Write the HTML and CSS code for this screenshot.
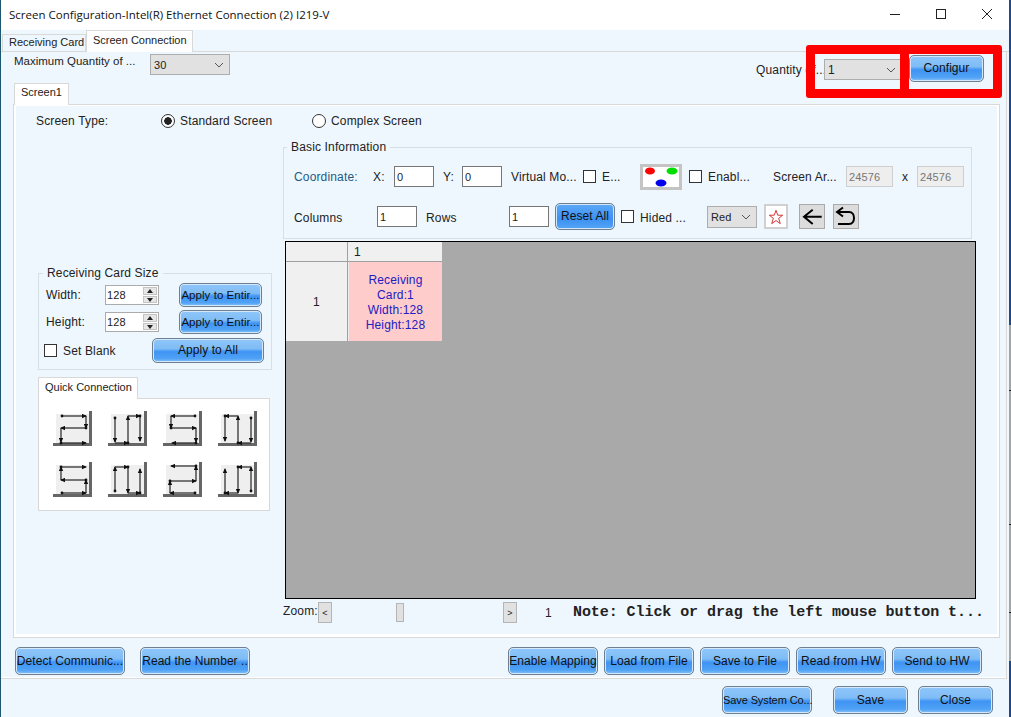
FILE: index.html
```html
<!DOCTYPE html>
<html>
<head>
    <title>Screen Configuration</title>
    <link rel="stylesheet" href="styles.css">
</head>
<body>
    <svg class="defs" width="0" height="0">
        <defs>
            <marker id="arr" markerWidth="5" markerHeight="5" refX="4" refY="2.5" orient="auto" markerUnits="userSpaceOnUse">
                <path d="M0 0.300L5 2.500L0 4.700Z" fill="#111"/>
            </marker>
            <marker id="dot" markerWidth="4" markerHeight="4" refX="2" refY="2" markerUnits="userSpaceOnUse">
                <circle cx="2" cy="2" r="1.400" fill="#111"/>
            </marker>
        </defs>
    </svg>

    <div class="window">
        <div class="titlebar">
            <span class="title">Screen Configuration-Intel(R) Ethernet Connection (2) I219-V</span>
            <div class="winbtns">
                <svg width="12" height="12" viewBox="0 0 12 12"><path d="M1 6.500H11" stroke="#222"/></svg>
                <svg width="12" height="12" viewBox="0 0 12 12"><rect x="1.500" y="1.500" width="9" height="9" fill="none" stroke="#222"/></svg>
                <svg width="12" height="12" viewBox="0 0 12 12"><path d="M1 1L11 11M11 1L1 11" stroke="#222"/></svg>
            </div>
        </div>

        <div class="tabbar">
            <div class="tab tab-off">Receiving Card</div>
            <div class="tab tab-on">Screen Connection</div>
        </div>

        <div class="page">
            <div class="toprow">
                <span class="maxlabel">Maximum Quantity of ...</span>
                <select class="sel sel-max"><option>30</option></select>
                <span class="qtylabel">Quantity of...</span>
                <select class="sel sel-qty"><option>1</option></select>
                <button class="btn btn-config">Configur</button>
            </div>

            <div class="tab screen-tab">Screen1</div>
            <div class="panel">
                <div class="panel-in">
                    <div class="typerow">
                        <span class="typelabel">Screen Type:</span>
                        <input type="radio" name="stype" checked>
                        <span class="typeopt">Standard Screen</span>
                        <input type="radio" name="stype">
                        <span>Complex Screen</span>
                    </div>

                    <div class="columns">
                        <div class="leftcol">
                            <fieldset class="cardsize">
                                <legend>Receiving Card Size</legend>
                                <div class="sizerow">
                                    <span class="sizelabel">Width:</span>
                                    <div class="spin">
                                        <input type="text" value="128">
                                        <div class="spinbtns"><i class="up"></i><i class="down"></i></div>
                                    </div>
                                    <button class="btn btn-apply">Apply to Entir...</button>
                                </div>
                                <div class="sizerow">
                                    <span class="sizelabel">Height:</span>
                                    <div class="spin">
                                        <input type="text" value="128">
                                        <div class="spinbtns"><i class="up"></i><i class="down"></i></div>
                                    </div>
                                    <button class="btn btn-apply">Apply to Entir...</button>
                                </div>
                                <div class="blankrow">
                                    <input type="checkbox">
                                    <span class="blanklabel">Set Blank</span>
                                    <button class="btn btn-all">Apply to All</button>
                                </div>
                            </fieldset>

                            <div class="tab quick-tab">Quick Connection</div>
                            <div class="quick">
                                <svg viewBox="0 0 39 35"><rect class="qc-bg" x="3" y="3" width="33" height="29"/><path class="qc-l" d="M0 33.500H37.500V0"/>
                                    <g class="qc-p"><path d="M33 5V17"/><path d="M8 17V31"/><path d="M9 5H33"/><path d="M33 17H8"/><path d="M8 32H33"/></g></svg>
                                <svg viewBox="0 0 39 35"><rect class="qc-bg" x="3" y="3" width="33" height="29"/><path class="qc-l" d="M0 33.500H37.500V0"/>
                                    <g class="qc-p"><path d="M7 7V31"/><path d="M7 32H20"/><path d="M20 32V5"/><path d="M20 5H32"/><path d="M32 5V30"/></g></svg>
                                <svg viewBox="0 0 39 35"><rect class="qc-bg" x="3" y="3" width="33" height="29"/><path class="qc-l" d="M0 33.500H37.500V0"/>
                                    <g class="qc-p"><path d="M8 5V17"/><path d="M33 17V31"/><path d="M32 5H8"/><path d="M8 17H33"/><path d="M33 32H9"/></g></svg>
                                <svg viewBox="0 0 39 35"><rect class="qc-bg" x="3" y="3" width="33" height="29"/><path class="qc-l" d="M0 33.500H37.500V0"/>
                                    <g class="qc-p"><path d="M33 7V31"/><path d="M33 32H20"/><path d="M20 32V5"/><path d="M20 5H7"/><path d="M7 5V30"/></g></svg>
                                <svg viewBox="0 0 39 35"><rect class="qc-bg" x="3" y="3" width="33" height="29"/><path class="qc-l" d="M0 33.500H37.500V0"/>
                                    <g class="qc-p"><path d="M33 31V18"/><path d="M8 18V5"/><path d="M9 31H33"/><path d="M33 18H8"/><path d="M8 5H33"/></g></svg>
                                <svg viewBox="0 0 39 35"><rect class="qc-bg" x="3" y="3" width="33" height="29"/><path class="qc-l" d="M0 33.500H37.500V0"/>
                                    <g class="qc-p"><path d="M7 29V5"/><path d="M7 5H20"/><path d="M20 5V31"/><path d="M20 31H32"/><path d="M32 31V7"/></g></svg>
                                <svg viewBox="0 0 39 35"><rect class="qc-bg" x="3" y="3" width="33" height="29"/><path class="qc-l" d="M0 33.500H37.500V0"/>
                                    <g class="qc-p"><path d="M7 31V19"/><path d="M33 19V4"/><path d="M32 31H7"/><path d="M7 19H33"/><path d="M33 4H8"/></g></svg>
                                <svg viewBox="0 0 39 35"><rect class="qc-bg" x="3" y="3" width="33" height="29"/><path class="qc-l" d="M0 33.500H37.500V0"/>
                                    <g class="qc-p"><path d="M33 29V5"/><path d="M33 5H20"/><path d="M20 5V31"/><path d="M20 31H7"/><path d="M7 31V7"/></g></svg>
                            </div>
                        </div>

                        <div class="rightcol">
                            <fieldset class="basic">
                                <legend>Basic Information</legend>
                                <div class="inforow">
                                    <span class="l79 coord">Coordinate:</span>
                                    <span class="l21">X:</span>
                                    <input class="tb" type="text" value="0">
                                    <span class="l19">Y:</span>
                                    <input class="tb" type="text" value="0">
                                    <span class="l72">Virtual Mo...</span>
                                    <input type="checkbox">
                                    <span class="l38">E...</span>
                                    <button class="rgb">
                                        <svg width="36" height="20" viewBox="0 0 36 20">
                                            <ellipse cx="7" cy="4" rx="5" ry="3.500" fill="#f00"/>
                                            <ellipse cx="29" cy="4" rx="5.500" ry="3.500" fill="#0d0"/>
                                            <ellipse cx="18" cy="16" rx="5.500" ry="3.500" fill="#00e"/>
                                        </svg>
                                    </button>
                                    <input type="checkbox">
                                    <span class="l65">Enabl...</span>
                                    <span class="l73">Screen Ar...</span>
                                    <input class="tb-off" type="text" value="24576" disabled>
                                    <span class="l24">x</span>
                                    <input class="tb-off" type="text" value="24576" disabled>
                                </div>
                                <div class="inforow inforow2">
                                    <span class="l83">Columns</span>
                                    <input class="tb" type="text" value="1">
                                    <span class="l83">Rows</span>
                                    <input class="tb tb-last" type="text" value="1">
                                    <button class="btn btn-reset">Reset All</button>
                                    <input type="checkbox">
                                    <span class="l66">Hided ...</span>
                                    <select class="sel sel-color"><option>Red</option></select>
                                    <button class="iconbtn starbtn">
                                        <svg width="16" height="16" viewBox="0 0 18 18"><path d="M9 1.500L11 7H16.500L12 10.500L13.800 16.500L9 13L4.200 16.500L6 10.500L1.500 7H7Z" fill="none" stroke="#c22" stroke-width="1"/></svg>
                                    </button>
                                    <button class="iconbtn">
                                        <svg width="24" height="23" viewBox="1 1 24 23"><path d="M22.700 12.700H5M13.700 5.700L5 12.700L13.700 20" fill="none" stroke="#000" stroke-width="2"/></svg>
                                    </button>
                                    <button class="iconbtn">
                                        <svg width="24" height="23" viewBox="1 1 24 23"><path d="M10 3.500L4 8L10 12.500M4 8H16C19.500 8 21 11 21 14C21 17 19.500 20 16 20H5" fill="none" stroke="#000" stroke-width="2"/></svg>
                                    </button>
                                </div>
                            </fieldset>

                            <div class="canvas">
                                <div class="cardgrid">
                                    <div class="cell"></div>
                                    <div class="cell cell-head">1</div>
                                    <div class="cell cell-row">1</div>
                                    <div class="cell cell-card">Receiving<br>Card:1<br>Width:128<br>Height:128</div>
                                </div>
                            </div>

                            <div class="zoomrow">
                                <span class="zoomlabel">Zoom:</span>
                                <button class="zoombtn">&lt;</button>
                                <div class="track"><div class="thumb"></div></div>
                                <button class="zoombtn">&gt;</button>
                                <span class="zoomval">1</span>
                                <span class="note">Note: Click or drag the left mouse button t...</span>
                            </div>
                        </div>
                    </div>
                </div>
            </div>

            <div class="actions">
                <button class="btn btn-left">Detect Communic...</button>
                <button class="btn btn-left">Read the Number ..</button>
                <div class="actions-right">
                    <button class="btn btn-act">Enable Mapping</button>
                    <button class="btn btn-act">Load from File</button>
                    <button class="btn btn-act">Save to File</button>
                    <button class="btn btn-act">Read from HW</button>
                    <button class="btn btn-act">Send to HW</button>
                </div>
            </div>
        </div>

        <div class="footer">
            <button class="btn btn-act btn-sys">Save System Co...</button>
            <button class="btn btn-foot">Save</button>
            <button class="btn btn-foot">Close</button>
        </div>

        <!-- red annotation boxes drawn over the screenshot -->
        <div class="mark mark-a"></div>
        <div class="mark mark-b"></div>
        <!-- bit of desktop showing past the window edge -->
        <div class="edge"></div>
    </div>
</body>
</html>
```

FILE: styles.css
```css
* {
    box-sizing: border-box;
}
body {
    margin: 0;
    font-family: "Liberation Sans", Arial, sans-serif;
    font-size: 12px;
    letter-spacing: 0.15px;
    color: #222;
}
span, legend {
    white-space: nowrap;
}
input, select, button {
    font-family: inherit;
    font-size: 12px;
    letter-spacing: inherit;
    color: #222;
    margin: 0;
}
.defs {
    position: absolute;
}
.window {
    position: relative;
    width: 1011px;
    height: 717px;
    overflow: hidden;
    background: #eef7fe;
    border-left: 1px solid #1d5670;
}

/* title bar */
.titlebar {
    height: 30px;
    background: #fff;
    display: flex;
    align-items: center;
    padding: 0 0 2px 8px;
}
.title {
    font-family: "Open Sans", sans-serif;
    font-size: 11.500px;
    letter-spacing: 0;
    color: #111;
}
.winbtns {
    margin-left: auto;
    display: flex;
    gap: 34px;
    padding-right: 18px;
}

/* tabs */
.tabbar {
    height: 22px;
    display: flex;
    align-items: flex-end;
    padding-left: 1px;
    border-bottom: 1px solid #d9d9d9;
}
.tab {
    border: 1px solid #d9d9d9;
    border-bottom: none;
    background: #fff;
    white-space: nowrap;
    font-size: 11px;
    letter-spacing: 0;
}
.tab-off {
    width: 84px;
    height: 17px;
    padding-left: 6px;
    line-height: 15px;
    background: #eef7fe;
}
.tab-on {
    width: 107px;
    height: 22px;
    padding-left: 6px;
    line-height: 19px;
    margin-bottom: -1px;
    position: relative;
}
.page {
    width: 1006px;
    height: 627px;
    border-bottom: 1px solid #d9d9d9;
    border-right: 1px solid #d9d9d9;
    box-shadow: inset 0 -1px 0 #fff;
}

/* top controls */
.toprow {
    height: 31px;
    display: flex;
    align-items: flex-start;
    padding-left: 13px;
}
.maxlabel {
    width: 136px;
    margin-top: 3px;
    font-size: 11.500px;
    letter-spacing: 0;
}
.sel {
    appearance: none;
    border: 1px solid #adadad;
    border-radius: 0;
    background: #e1e1e1 url("data:image/svg+xml,%3Csvg xmlns='http://www.w3.org/2000/svg' width='10' height='6'%3E%3Cpath d='M1 1L5 5L9 1' fill='none' stroke='%23555'/%3E%3C/svg%3E") no-repeat right 5px center;
    padding: 0 0 0 3px;
    height: 21px;
    font-size: 11px;
}
.sel-max {
    width: 80px;
    margin-top: 2px;
}
.qtylabel {
    width: 68px;
    margin-left: 526px;
    margin-top: 11px;
}
.sel-qty {
    width: 78px;
    margin-top: 7px;
    font-size: 12px;
}
.btn {
    border: 1px solid #6d7f90;
    border-radius: 5px;
    padding: 0 0 1px;
    white-space: nowrap;
    overflow: hidden;
    color: #111;
    font-size: 12px;
    letter-spacing: 0.05px;
    background: linear-gradient(#8fc6f9 0, #7fbcf6 42%, #3f94f4 55%, #4fa2f5 85%, #8ac3f8 100%);
    box-shadow: inset 0 0 0 1px #d3e8fb;
}
.btn-config {
    width: 75px;
    height: 27px;
    margin-left: 7px;
    margin-top: 3px;
}

/* screen tab and panel */
.screen-tab {
    width: 55px;
    height: 22px;
    margin-left: 13px;
    margin-bottom: -1px;
    padding-left: 6px;
    line-height: 17px;
    position: relative;
    z-index: 1;
}
.panel {
    width: 987px;
    height: 534px;
    margin-left: 12px;
    border: 1px solid #d9d9d9;
    padding: 1px 2px 3px;
    background: #fff;
}
.panel-in {
    height: 100%;
    background: #eef7fe;
    padding-top: 5px;
}
.typerow {
    height: 20px;
    display: flex;
    align-items: center;
    padding-left: 20px;
}
.typelabel {
    width: 125px;
}
.typeopt {
    width: 132px;
}
input[type="radio"] {
    appearance: none;
    width: 14px;
    height: 14px;
    border: 1px solid #333;
    border-radius: 50%;
    background: #fff;
    margin-right: 5px;
}
input[type="radio"]:checked {
    background: radial-gradient(circle, #222 0 3.500px, #fff 4px);
}
input[type="checkbox"] {
    appearance: none;
    flex: none;
    width: 13px;
    height: 13px;
    border: 1px solid #333;
    background: #fff;
    margin-right: 6px;
}
.columns {
    display: flex;
    margin-top: 9px;
}
.leftcol {
    width: 267px;
    padding-left: 22px;
}
.rightcol {
    flex: 1;
}
fieldset {
    margin: 0;
    border: 1px solid #d5dfe6;
    min-width: 0;
}
legend {
    padding: 0 4px;
    line-height: 14px;
}

/* receiving card size */
.cardsize {
    width: 234px;
    height: 104px;
    margin-top: 126px;
    padding: 3px 0 0 7px;
}
.cardsize legend {
    margin-left: -3px;
}
.sizerow {
    display: flex;
    align-items: center;
    height: 24px;
    margin-bottom: 3px;
}
.sizelabel {
    width: 59px;
}
.spin {
    width: 54px;
    height: 20px;
    display: flex;
    background: #fff;
    border: 1px solid #ababab;
    padding: 1px;
}
.spin input {
    width: 36px;
    height: 16px;
    border: none;
    padding: 0;
    font-size: 11px;
    background: #fff;
    outline: none;
}
.spinbtns {
    width: 14px;
    display: flex;
    flex-direction: column;
    gap: 1px;
}
.spinbtns i {
    flex: 1;
    background: #e6e6e6;
    border: 1px solid #c4c4c4;
    position: relative;
}
.spinbtns i::after {
    content: "";
    position: absolute;
    left: 3px;
    border-left: 3px solid transparent;
    border-right: 3px solid transparent;
}
.spinbtns .up::after {
    top: 1px;
    border-bottom: 4px solid #222;
}
.spinbtns .down::after {
    top: 1px;
    border-top: 4px solid #222;
}
.btn-apply {
    width: 83px;
    height: 24px;
    margin-left: 20px;
    font-size: 11.500px;
}
.blankrow {
    display: flex;
    align-items: center;
    padding-top: 1px;
    margin-left: -2px;
}
.blanklabel {
    width: 89px;
}
.btn-all {
    width: 112px;
    height: 25px;
}

/* quick connection */
.quick-tab {
    width: 100px;
    height: 22px;
    margin-top: 7px;
    margin-bottom: -1px;
    padding-left: 6px;
    line-height: 18px;
    position: relative;
    z-index: 1;
}
.quick {
    width: 232px;
    height: 113px;
    background: #fff;
    border: 1px solid #d9d9d9;
    padding: 12px 0 0 14px;
    display: grid;
    grid-template-columns: repeat(4, 55px);
    grid-template-rows: 35px 35px;
    row-gap: 16px;
}
.quick svg {
    width: 39px;
    height: 35px;
}
.qc-bg {
    fill: #efefef;
}
.qc-l {
    fill: none;
    stroke: #666;
    stroke-width: 3;
}
.qc-p {
    fill: none;
    stroke: #333;
    stroke-width: 1.300;
    marker-start: url(#dot);
    marker-end: url(#arr);
}
/* the short connecting strokes have no start dot */
.quick svg:nth-child(odd) .qc-p path:nth-child(-n+2),
.quick svg:nth-child(even) .qc-p path:nth-child(even) {
    marker-start: none;
}

/* basic information */
.basic {
    width: 689px;
    height: 99px;
    padding: 12px 0 0 10px;
}
.basic legend {
    margin-left: -7px;
}
.inforow {
    display: flex;
    align-items: center;
    height: 21px;
}
.inforow2 {
    margin-top: 19px;
}
.inforow2 span {
    margin-top: 2px;
}
.coord {
    color: #1d5b86;
}
.l79 { width: 79px; }
.l21 { width: 21px; }
.l19 { width: 19px; }
.l72 { width: 72px; }
.l38 { width: 38px; }
.l65 { width: 65px; }
.l73 { width: 73px; }
.l24 { width: 24px; text-align: center; }
.l83 { width: 83px; }
.l66 { width: 67px; }
.tb {
    width: 40px;
    height: 21px;
    margin-right: 9px;
    border: 1px solid #767676;
    padding: 0 2px;
    font-size: 11px;
    background: #fff;
}
.tb-last {
    margin-right: 6px;
}
.tb-off {
    width: 47px;
    height: 21px;
    border: 1px solid #cfcfcf;
    background: #eee;
    color: #777;
    padding: 0 2px;
    font-size: 11px;
}
.rgb {
    width: 42px;
    height: 26px;
    margin-right: 7px;
    padding: 0;
    border: 3px solid #c4c4c4;
    background: #fff;
    line-height: 0;
}
.btn-reset {
    width: 60px;
    height: 27px;
    margin-right: 6px;
    background: linear-gradient(#5ea9f6, #3a90f3 60%, #57a6f5);
}
.sel-color {
    width: 50px;
    height: 22px;
    margin-right: 7px;
}
.iconbtn {
    width: 26px;
    height: 25px;
    margin-right: 8px;
    padding: 0;
    border: 1px solid #aaa;
    background: #dcdcdc;
    display: flex;
    align-items: center;
    justify-content: center;
}
.starbtn {
    width: 24px;
    margin-right: 11px;
    background: #fff;
    border-width: 2px;
    border-color: #d0d0d0;
}

/* card canvas */
.canvas {
    width: 691px;
    height: 358px;
    margin: 2px 0 0 2px;
    border: 1px solid #000;
    background: #a9a9a9;
}
.cardgrid {
    display: grid;
    grid-template-columns: 61px 94px;
    grid-template-rows: 19px 79px;
    gap: 1px;
    width: 156px;
    background: #a0a0a0;
}
.cell {
    background: #f0f0f0;
    display: flex;
    align-items: center;
    justify-content: center;
    text-align: center;
}
.cell-head {
    justify-content: flex-start;
    padding-left: 6px;
}
.cell-card {
    background: #ffcccc;
    color: #2020c0;
    line-height: 15px;
    border-left: 1px solid #eee;
    padding-top: 2px;
}

/* zoom row */
.zoomrow {
    display: flex;
    align-items: flex-start;
    height: 21px;
    margin-top: 3px;
}
.zoomlabel {
    width: 35px;
    line-height: 18px;
}
.zoombtn {
    width: 14px;
    height: 21px;
    padding: 0;
    border: 1px solid #b5b5b5;
    background: #e1e1e1;
    font-size: 9px;
}
.track {
    width: 171px;
    height: 21px;
    display: flex;
    align-items: center;
    padding-left: 64px;
}
.thumb {
    width: 8px;
    height: 19px;
    background: #e1e1e1;
    border: 1px solid #b5b5b5;
}
.zoomval {
    width: 56px;
    padding-left: 28px;
    line-height: 23px;
}
.note {
    font-family: "Liberation Mono", monospace;
    font-weight: bold;
    font-size: 15px;
    letter-spacing: -0.070px;
    line-height: 21px;
}

/* bottom buttons */
.actions {
    display: flex;
    gap: 15px;
    margin-top: 9px;
    padding-left: 14px;
}
.actions .btn {
    height: 28px;
}
.btn-left {
    width: 110px;
}
.actions-right {
    display: flex;
    gap: 6px;
    margin-left: 243px;
}
.btn-act {
    width: 90px;
}
.footer {
    display: flex;
    justify-content: flex-end;
    padding: 7px 18px 0 0;
}
.footer .btn {
    height: 28px;
}
.btn-sys {
    margin-right: 21px;
    font-size: 11px;
    letter-spacing: -0.100px;
    overflow: visible;
}
.btn-foot {
    width: 75px;
    margin-right: 10px;
}
.btn-foot:last-child {
    margin-right: 0;
}

/* annotation on top of the window */
.mark {
    position: absolute;
    top: 45px;
    height: 53px;
    border: 9px solid #f00;
    border-radius: 3px;
}
.mark-a {
    left: 805px;
    width: 103px;
}
.mark-b {
    left: 899px;
    width: 102px;
}
.edge {
    position: absolute;
    right: 0;
    top: 0;
    width: 2px;
    height: 717px;
    background: linear-gradient(#1d4a8a 0 325px, #a5a5a5 325px 390px, #222 390px 391px, #a5a5a5 391px 524px, #222 524px 525px, #a5a5a5 525px 612px, #222 612px 613px, #a5a5a5 613px 661px, #1d4a8a 661px);
}
```
